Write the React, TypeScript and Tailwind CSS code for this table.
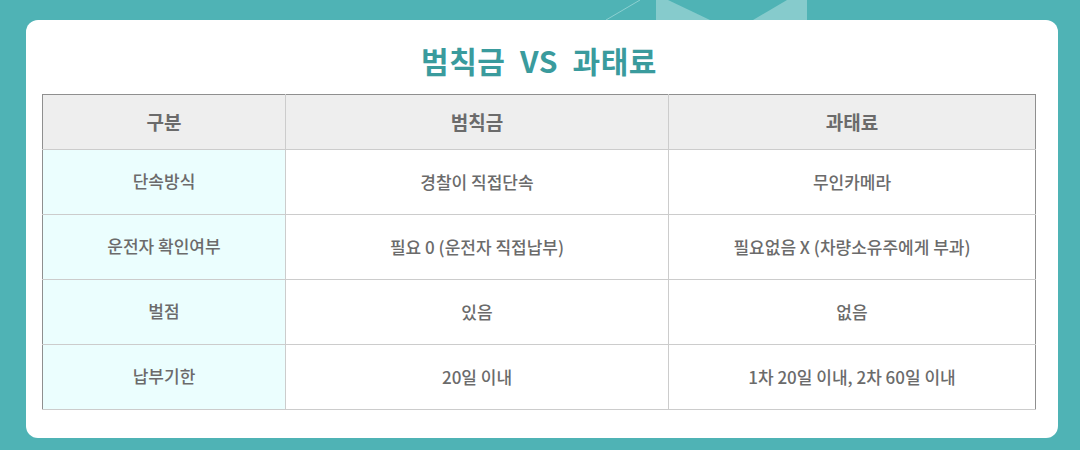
const rows = [
  { label: "단속방식", fine: "경찰이 직접단속", penalty: "무인카메라" },
  { label: "운전자 확인여부", fine: "필요 0 (운전자 직접납부)", penalty: "필요없음 X (차량소유주에게 부과)" },
  { label: "벌점", fine: "있음", penalty: "없음" },
  { label: "납부기한", fine: "20일 이내", penalty: "1차 20일 이내, 2차 60일 이내" },
];

const font = { fontFamily: '"Noto Sans CJK KR", "Noto Sans", sans-serif' };

export default function App() {
  return (
    <div className="relative h-[450px] w-[1080px] overflow-hidden bg-[#4fb3b5] pl-[26px] pr-[22px] pt-[20px]" style={font}>
      {/* top decoration */}
      <svg className="absolute left-0 top-0" width="1080" height="20" viewBox="0 0 1080 20">
        <line x1="606" y1="20" x2="640" y2="0" stroke="#8ccfd0" strokeWidth="1" />
        <rect x="656" y="0" width="151" height="20" fill="#86cbcc" />
        <polygon points="668,0 787,0 753,20 710,20" fill="#4fb3b5" />
      </svg>

      <div className="flex h-[418px] flex-col rounded-[12px] bg-white pl-[16px]">
        <h1 className="mt-[21px] w-[994px] text-center text-[30px] font-bold leading-[38px] tracking-[0.5px] text-[#3a9b9d]">
          범칙금&nbsp;&nbsp;VS&nbsp;&nbsp;과태료
        </h1>

        <table className="mt-[15px] w-[994px] table-fixed border-collapse border border-[#8f8f8f] text-[#6b6b6b]">
          <colgroup>
            <col className="w-[243px]" />
            <col className="w-[383px]" />
            <col />
          </colgroup>
          <thead>
            <tr className="h-[55px] bg-[#eeeeee] text-[19px] font-bold">
              <th className="border border-[#cccccc] border-t-[#8f8f8f] border-l-[#8f8f8f]">구분</th>
              <th className="border border-[#cccccc] border-t-[#8f8f8f]">범칙금</th>
              <th className="border border-[#cccccc] border-t-[#8f8f8f] border-r-[#8f8f8f]">과태료</th>
            </tr>
          </thead>
          <tbody>
            {rows.map((r) => (
              <tr key={r.label} className="h-[65px] text-[17px] font-medium">
                <td className="border border-[#cccccc] border-l-[#8f8f8f] bg-[#ebfefe] pb-[2px] text-center">{r.label}</td>
                <td className="border border-[#cccccc] text-center">{r.fine}</td>
                <td className="border border-[#cccccc] border-r-[#8f8f8f] text-center">{r.penalty}</td>
              </tr>
            ))}
          </tbody>
        </table>
      </div>
    </div>
  );
}
